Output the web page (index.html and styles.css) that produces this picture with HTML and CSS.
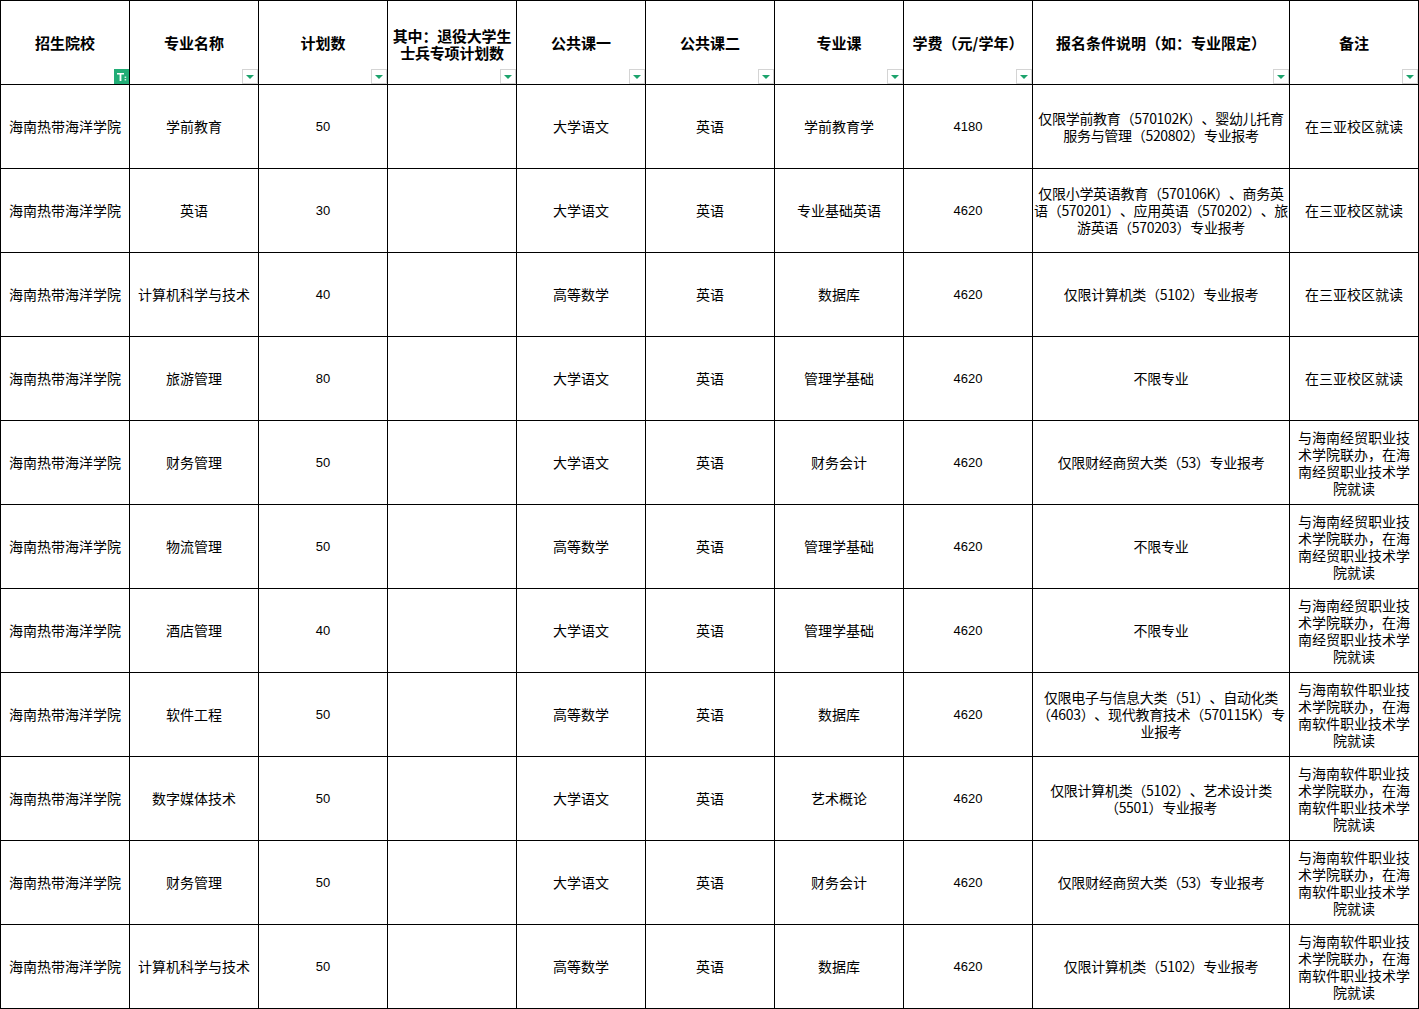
FILE: index.html
```html
<!DOCTYPE html>
<html lang="zh">
<head>
<meta charset="utf-8">
<title>招生计划</title>
<link rel="stylesheet" href="styles.css">
</head>
<body>
<table class="sheet">
  <colgroup>
    <col class="c-std"><col class="c-std"><col class="c-std"><col class="c-std"><col class="c-std">
    <col class="c-std"><col class="c-std"><col class="c-std"><col class="c-wide"><col class="c-std">
  </colgroup>
  <thead>
    <tr class="head-row">
      <th>招生院校<span class="filter filter-on"><svg viewBox="0 0 15 15" width="15" height="15"><path d="M3 4h7v1.6H7.4V12H5.6V5.6H3z" fill="#fff"/><rect x="10.6" y="7.6" width="1.6" height="1.2" fill="#fff"/><rect x="10.6" y="10.2" width="1.6" height="1.2" fill="#fff"/></svg></span></th>
      <th>专业名称<span class="filter"><i class="tri"></i></span></th>
      <th>计划数<span class="filter"><i class="tri"></i></span></th>
      <th class="tight">其中：退役大学生士兵专项计划数<span class="filter"><i class="tri"></i></span></th>
      <th>公共课一<span class="filter"><i class="tri"></i></span></th>
      <th>公共课二<span class="filter"><i class="tri"></i></span></th>
      <th>专业课<span class="filter"><i class="tri"></i></span></th>
      <th>学费（元/学年）<span class="filter"><i class="tri"></i></span></th>
      <th>报名条件说明（如：专业限定）<span class="filter"><i class="tri"></i></span></th>
      <th>备注<span class="filter"><i class="tri"></i></span></th>
    </tr>
  </thead>
  <tbody>
    <tr>
      <td>海南热带海洋学院</td><td>学前教育</td><td class="num">50</td><td></td><td>大学语文</td><td>英语</td><td>学前教育学</td><td class="num">4180</td>
      <td class="cond">仅限学前教育（570102K）、婴幼儿托育
服务与管理（520802）专业报考</td><td>在三亚校区就读</td>
    </tr>
    <tr>
      <td>海南热带海洋学院</td><td>英语</td><td class="num">30</td><td></td><td>大学语文</td><td>英语</td><td>专业基础英语</td><td class="num">4620</td>
      <td class="cond">仅限小学英语教育（570106K）、商务英
语（570201）、应用英语（570202）、旅
游英语（570203）专业报考</td><td>在三亚校区就读</td>
    </tr>
    <tr>
      <td>海南热带海洋学院</td><td>计算机科学与技术</td><td class="num">40</td><td></td><td>高等数学</td><td>英语</td><td>数据库</td><td class="num">4620</td>
      <td class="cond">仅限计算机类（5102）专业报考</td><td>在三亚校区就读</td>
    </tr>
    <tr>
      <td>海南热带海洋学院</td><td>旅游管理</td><td class="num">80</td><td></td><td>大学语文</td><td>英语</td><td>管理学基础</td><td class="num">4620</td>
      <td class="cond">不限专业</td><td>在三亚校区就读</td>
    </tr>
    <tr>
      <td>海南热带海洋学院</td><td>财务管理</td><td class="num">50</td><td></td><td>大学语文</td><td>英语</td><td>财务会计</td><td class="num">4620</td>
      <td class="cond">仅限财经商贸大类（53）专业报考</td><td class="note">与海南经贸职业技术学院联办，在海南经贸职业技术学院就读</td>
    </tr>
    <tr>
      <td>海南热带海洋学院</td><td>物流管理</td><td class="num">50</td><td></td><td>高等数学</td><td>英语</td><td>管理学基础</td><td class="num">4620</td>
      <td class="cond">不限专业</td><td class="note">与海南经贸职业技术学院联办，在海南经贸职业技术学院就读</td>
    </tr>
    <tr>
      <td>海南热带海洋学院</td><td>酒店管理</td><td class="num">40</td><td></td><td>大学语文</td><td>英语</td><td>管理学基础</td><td class="num">4620</td>
      <td class="cond">不限专业</td><td class="note">与海南经贸职业技术学院联办，在海南经贸职业技术学院就读</td>
    </tr>
    <tr>
      <td>海南热带海洋学院</td><td>软件工程</td><td class="num">50</td><td></td><td>高等数学</td><td>英语</td><td>数据库</td><td class="num">4620</td>
      <td class="cond">仅限电子与信息大类（51）、自动化类
（4603）、现代教育技术（570115K）专
业报考</td><td class="note">与海南软件职业技术学院联办，在海南软件职业技术学院就读</td>
    </tr>
    <tr>
      <td>海南热带海洋学院</td><td>数字媒体技术</td><td class="num">50</td><td></td><td>大学语文</td><td>英语</td><td>艺术概论</td><td class="num">4620</td>
      <td class="cond">仅限计算机类（5102）、艺术设计类
（5501）专业报考</td><td class="note">与海南软件职业技术学院联办，在海南软件职业技术学院就读</td>
    </tr>
    <tr>
      <td>海南热带海洋学院</td><td>财务管理</td><td class="num">50</td><td></td><td>大学语文</td><td>英语</td><td>财务会计</td><td class="num">4620</td>
      <td class="cond">仅限财经商贸大类（53）专业报考</td><td class="note">与海南软件职业技术学院联办，在海南软件职业技术学院就读</td>
    </tr>
    <tr>
      <td>海南热带海洋学院</td><td>计算机科学与技术</td><td class="num">50</td><td></td><td>高等数学</td><td>英语</td><td>数据库</td><td class="num">4620</td>
      <td class="cond">仅限计算机类（5102）专业报考</td><td class="note">与海南软件职业技术学院联办，在海南软件职业技术学院就读</td>
    </tr>
  </tbody>
</table>
</body>
</html>
```

FILE: styles.css
```css
html, body {
  margin: 0;
  padding: 0;
  background: #fff;
}

.sheet {
  border-collapse: collapse;
  table-layout: fixed;
  width: 1419px;
  font-family: "Noto Sans CJK SC", "Noto Sans", sans-serif;
  color: #000;
}

.c-std { width: 129px; }
.c-wide { width: 257px; }

.sheet th,
.sheet td {
  border: 1px solid #000;
  padding: 0 3px;
  text-align: center;
  vertical-align: middle;
  overflow: hidden;
}

.sheet tr {
  height: 84px;
}

.head-row th {
  position: relative;
  font-size: 15px;
  font-weight: bold;
  line-height: 17px;
  padding: 0 2px;
  text-spacing-trim: space-all;
}

.head-row th.tight {
  letter-spacing: -0.2px;
  padding: 2px 1px 0;
}

.sheet td {
  font-size: 14px;
  line-height: 17px;
  text-spacing-trim: space-all;
}

.sheet td.cond {
  padding: 0 1px;
  letter-spacing: -0.3px;
  white-space: pre;
}

.sheet td.num {
  font-family: "Liberation Sans", sans-serif;
  font-size: 13px;
}

.sheet td.note {
  padding: 0 4px;
}

.filter {
  position: absolute;
  right: 0;
  bottom: 0;
  width: 16px;
  height: 15px;
  box-sizing: border-box;
  border: 1px solid #d4d4d4;
  background: #fff;
  display: flex;
  align-items: center;
  justify-content: center;
}

.filter-on {
  border: none;
  background: #21ad76;
  width: 15px;
}

.filter-on svg {
  display: block;
}

.tri {
  display: block;
  width: 0;
  height: 0;
  border-left: 4px solid transparent;
  border-right: 4px solid transparent;
  border-top: 4px solid #1ca36c;
  margin-top: 1px;
}
```
